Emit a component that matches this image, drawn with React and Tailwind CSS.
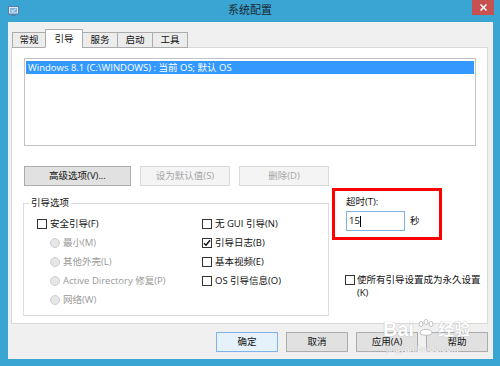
import React from 'react';

const FONT = "font-['Segoe_UI','Open_Sans','Noto_Sans_CJK_SC',sans-serif]";

function CheckBox({ checked, label }) {
  return (
    <div className="flex items-center h-[19px]">
      <span className="w-[10px] h-[10px] flex-none border border-[#333] bg-white flex items-center justify-center">
        {checked && (
          <svg width="8" height="8" viewBox="0 0 8 8">
            <path d="M1 4.2 L3 6.3 L7 1.2" stroke="#111" strokeWidth="1.4" fill="none" />
          </svg>
        )}
      </span>
      <span className="ml-[3px] text-[#111]">{label}</span>
    </div>
  );
}

function Radio({ label }) {
  return (
    <div className="flex items-center h-[19px] ml-[13px]">
      <span className="w-[10px] h-[10px] flex-none rounded-full border border-[#cfcfcf] bg-[#e6e6e6]" />
      <span className="ml-[3px] text-[#999]">{label}</span>
    </div>
  );
}

function Button({ children, disabled, primary, className = '' }) {
  return (
    <div
      className={`h-[20px] flex items-center justify-center border ${
        disabled
          ? 'bg-[#f4f4f4] border-[#dadada] text-[#a6a6a6]'
          : primary
            ? 'bg-[#e5f1fb] border-[#7eb4ea] text-[#111]'
            : 'bg-[#e1e1e1] border-[#adadad] text-[#111]'
      } ${className}`}
    >
      {children}
    </div>
  );
}

function Tab({ label, active, className = '' }) {
  return (
    <div
      className={`flex items-center justify-center border border-[#acacac] ${
        active ? 'h-[19px] bg-white border-b-white' : 'h-[16px] bg-[#ececec]'
      } ${className}`}
    >
      {label}
    </div>
  );
}

export default function App() {
  return (
    <div className={`relative w-[500px] h-[366px] bg-[#3aa5d3] flex flex-col text-[9.5px] leading-[12px] ${FONT}`}>
      {/* Title bar */}
      <div className="relative h-[22px] flex-none flex items-center">
        <svg className="ml-[8px]" width="11" height="12" viewBox="0 0 11 12">
          <rect x="0.5" y="1.5" width="10" height="7.5" fill="#dcecf8" stroke="#5a7da8" />
          <rect x="2" y="3" width="7" height="4.5" fill="#7fb2e0" />
          <path d="M3.5 5.2 L5 6.5 L7.5 3.8" stroke="#fff" strokeWidth="1" fill="none" />
          <rect x="3.5" y="9.5" width="4" height="1.5" fill="#5a7da8" />
        </svg>
        <div className="absolute left-0 right-0 top-[3px] text-center text-[11px] leading-[14px] text-[#1b2a33]">系统配置</div>
        <div className="absolute right-[6px] top-0 w-[22px] h-[15px] bg-[#c75050] flex items-center justify-center">
          <svg width="7" height="7" viewBox="0 0 7 7">
            <path d="M0.5 0.5 L6.5 6.5 M6.5 0.5 L0.5 6.5" stroke="#fff" strokeWidth="1.5" />
          </svg>
        </div>
      </div>

      {/* Client */}
      <div className="flex-1 ml-[8px] mr-[7px] mb-[7px] bg-[#f0f0f0] flex flex-col text-[#111]">
        <div className="relative z-10 h-[26px] -mb-px flex items-end pl-[4px]">
          <Tab label="常规" className="w-[34px]" />
          <Tab label="引导" active className="w-[38px] -ml-px" />
          <Tab label="服务" className="w-[36px] -ml-px" />
          <Tab label="启动" className="w-[36px] -ml-px" />
          <Tab label="工具" className="w-[36px] -ml-px" />
        </div>

        {/* Tab panel */}
        <div className="h-[277px] flex-none ml-[3px] mr-[5px] bg-white border border-[#d9d9d9] pl-[11px] pt-[10px]">
          <div className="ml-[1px] w-[452px] h-[88px] border border-[#c3c3c3] pt-[2px] px-[1px]">
            <div className="h-[13px] bg-[#3399ff] text-white leading-[13px] pl-[2px]">
              Windows 8.1 (C:\WINDOWS) : 当前 OS; 默认 OS
            </div>
          </div>

          <div className="flex gap-[9px] mt-[20px] ml-[1px]">
            <Button className="w-[107px]">高级选项(V)...</Button>
            <Button disabled className="w-[90px]">设为默认值(S)</Button>
            <Button disabled className="w-[90px]">删除(D)</Button>
          </div>

          <div className="flex">
            <fieldset className="w-[306px] h-[119px] mt-[11px] border border-[#dcdcdc]">
              <legend className="ml-[5px] px-[2px] leading-[12px]">引导选项</legend>
              <div className="grid grid-cols-[165px_1fr] pl-[13px] pt-[5px]">
                <div>
                  <CheckBox label="安全引导(F)" />
                  <Radio label="最小(M)" />
                  <Radio label="其他外壳(L)" />
                  <Radio label="Active Directory 修复(P)" />
                  <Radio label="网络(W)" />
                </div>
                <div>
                  <CheckBox label="无 GUI 引导(N)" />
                  <CheckBox checked label="引导日志(B)" />
                  <CheckBox label="基本视频(E)" />
                  <CheckBox label="OS 引导信息(O)" />
                </div>
              </div>
            </fieldset>

            <div className="flex flex-col ml-[3px]">
              <div className="mt-[2px] w-[110px] h-[52px] border-[3px] border-[#ff0000] pl-[11px] pt-[5px]">
                <div>超时(T):</div>
                <div className="flex items-center mt-[3px]">
                  <div className="w-[59px] h-[20px] border border-[#7eb4ea] bg-white flex items-center pl-[2px]">
                    15<span className="w-px h-[11px] bg-black" />
                  </div>
                  <span className="ml-[5px]">秒</span>
                </div>
              </div>
              <div className="flex items-start mt-[33px] pl-[13px]">
                <span className="w-[10px] h-[10px] flex-none mt-[2px] border border-[#333] bg-white" />
                <span className="ml-[2px] leading-[13px]">
                  使所有引导设置成为永久设置
                  <br />
                  (K)
                </span>
              </div>
            </div>
          </div>
        </div>

        <div className="flex justify-end gap-[8px] mt-[8px] pr-[5px]">
          <Button primary className="w-[62px]">确定</Button>
          <Button className="w-[62px]">取消</Button>
          <Button className="w-[62px]">应用(A)</Button>
          <Button className="w-[62px]">帮助</Button>
        </div>
      </div>

      {/* Baidu watermark */}
      <div className="absolute left-[383px] top-[318px] flex items-end text-white [text-shadow:0_0_1px_#9a9a9a] pointer-events-none">
        <span className="font-['Liberation_Sans',sans-serif] font-bold text-[20px] leading-[22px]">Bai</span>
        <svg className="mx-[2px] mb-[3px]" width="20" height="18" viewBox="0 0 20 18">
          <g fill="#fff" stroke="#b4b4b4" strokeWidth="0.8">
            <ellipse cx="5" cy="5" rx="2" ry="2.6" />
            <ellipse cx="10" cy="3" rx="2" ry="2.6" />
            <ellipse cx="15" cy="5" rx="2" ry="2.6" />
            <path d="M4 14 C4 9 16 9 16 14 C16 17 4 17 4 14 Z" />
          </g>
        </svg>
        <span className="text-[16px] leading-[22px] font-bold">经验</span>
      </div>
      <div className="absolute left-[386px] top-[343px] text-[9px] text-white [text-shadow:0_0_1px_#9a9a9a] font-['Liberation_Sans',sans-serif] pointer-events-none">
        jingyan.baidu.com
      </div>
    </div>
  );
}
